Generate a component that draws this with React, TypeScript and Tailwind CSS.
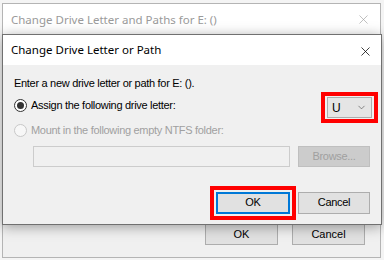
import { ChevronDown, X } from "lucide-react";

function Btn({ label, className = "" }: { label: string; className?: string }) {
  return (
    <div
      className={`flex items-center justify-center bg-[#e1e1e1] border border-[#adadad] text-[11px] text-black ${className}`}
    >
      {label}
    </div>
  );
}

export default function App() {
  return (
    <div className="relative w-[384px] h-[260px] overflow-hidden bg-[#f4f4f4] font-['Liberation_Sans',Arial,sans-serif]">
      {/* back window */}
      <div className="absolute left-[2px] top-[3px] w-[379px] h-[255px] flex flex-col border border-[#b4b4b4] bg-[#f0f0f0]">
        <div className="h-[31px] bg-white flex items-center justify-between pl-[8px] pr-[9px]">
          <span className="font-['Noto_Sans',sans-serif] text-[11.5px] text-[#9a9a9a]">
            Change Drive Letter and Paths for E: ()
          </span>
          <X size={15} strokeWidth={1} className="text-[#9a9a9a]" />
        </div>
        <div className="flex-1 flex items-end justify-end gap-[14px] pr-[15px] pb-[12px]">
          <Btn label="OK" className="w-[73px] h-[21px]" />
          <Btn label="Cancel" className="w-[73px] h-[21px]" />
        </div>
      </div>

      {/* front dialog */}
      <div className="absolute left-[2px] top-[34px] w-[380px] h-[191px] flex flex-col border border-[#707070] bg-[#f0f0f0] shadow-[0_2px_12px_rgba(0,0,0,0.35)]">
        <div className="h-[30px] bg-white flex items-center justify-between pl-[8px] pr-[8px]">
          <span className="font-['Noto_Sans',sans-serif] text-[11.5px] text-black">
            Change Drive Letter or Path
          </span>
          <X size={15} strokeWidth={1.2} className="text-black mt-[2px]" />
        </div>
        <div className="flex flex-col pl-[11px] text-[11px] tracking-[-0.3px] text-black">
          <div className="mt-[11px] h-[14px] leading-[14px]">Enter a new drive letter or path for E: ().</div>

          <div className="mt-[2px] flex items-center justify-between pr-[3px]">
            <div className="flex items-center gap-[4px] mb-[4px]">
              <div className="w-[13px] h-[13px] rounded-full border border-[#333] bg-white flex items-center justify-center">
                <div className="w-[7px] h-[7px] rounded-full bg-[#333]" />
              </div>
              <span>Assign the following drive letter:</span>
            </div>
            <div className="border-[4px] border-[#ff0000] px-[2px] py-[1px]">
              <div className="w-[45px] h-[21px] bg-[#e5e5e5] border border-[#adadad] flex items-center justify-between pl-[4px] pr-[4px]">
                <span className="text-[12px]">U</span>
                <ChevronDown size={11} strokeWidth={1.3} className="text-[#444]" />
              </div>
            </div>
          </div>

          <div className="mt-[-1px] flex items-center gap-[4px] text-[#a0a0a0]">
            <div className="w-[13px] h-[13px] rounded-full border border-[#c8c8c8] bg-[#f7f7f7]" />
            <span>Mount in the following empty NTFS folder:</span>
          </div>

          <div className="mt-[7px] ml-[19px] flex items-center gap-[8px]">
            <div className="w-[257px] h-[21px] border border-[#cccccc] bg-[#f0f0f0]" />
            <div className="w-[72px] h-[21px] flex items-center justify-center bg-[#cccccc] border border-[#bfbfbf] text-[#a0a0a0]">
              Browse...
            </div>
          </div>

          <div className="mt-[19px] flex items-center justify-end gap-[2px] pr-[11px]">
            <div className="border-[4px] border-[#ff0000] p-[2px]">
              <div className="w-[74px] h-[22px] flex items-center justify-center bg-[#e1e1e1] border-2 border-[#0078d7]">
                OK
              </div>
            </div>
            <Btn label="Cancel" className="w-[72px] h-[22px]" />
          </div>
        </div>
      </div>
    </div>
  );
}
